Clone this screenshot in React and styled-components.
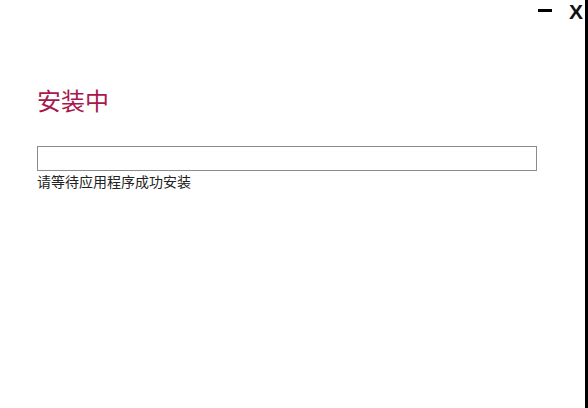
import React from 'react'
import styled, { createGlobalStyle } from 'styled-components';

const GlobalStyle = createGlobalStyle`
  html, body {
    margin: 0;
    padding: 0;
    background: #fff;
  }
  body {
    font-family: "Noto Sans CJK SC", "Liberation Sans", sans-serif;
  }
`;

function App() {
  return (
    <Window>
      <GlobalStyle />
      <TitleBar>
        <Minimize aria-label="minimize" />
        <Close>X</Close>
      </TitleBar>
      <Content>
        <Heading>安装中</Heading>
        <Progress />
        <Hint>请等待应用程序成功安装</Hint>
      </Content>
    </Window>
  )
}

export default App

const Window = styled.div`
  width: 585px;
  height: 408px;
  border-right: 3px solid #000;
  display: flex;
  flex-direction: column;
  background: #fff;
`;

const TitleBar = styled.div`
  height: 24px;
  display: flex;
  justify-content: flex-end;
  align-items: flex-start;
  padding-right: 2px;
`;

const Minimize = styled.span`
  display: block;
  width: 14px;
  height: 3px;
  background: #000;
  margin-top: 9px;
  margin-right: 17px;
`;

const Close = styled.span`
  font-family: "Liberation Sans", sans-serif;
  font-weight: 700;
  font-size: 21px;
  line-height: 24px;
  color: #111;
  margin-top: 0px;
`;

const Content = styled.div`
  display: flex;
  flex-direction: column;
  padding: 56px 0 0 37px;
`;

const Heading = styled.h1`
  margin: 0;
  font-family: "Noto Sans CJK SC", sans-serif;
  font-weight: 400;
  font-size: 24px;
  line-height: 40px;
  color: #a8184e;
`;

const Progress = styled.div`
  margin-top: 26px;
  width: 498px;
  height: 23px;
  border: 1px solid #8c8c8c;
`;

const Hint = styled.p`
  margin: 0;
  font-family: "Noto Sans CJK SC", sans-serif;
  font-size: 14px;
  line-height: 20px;
  color: #222;
`;
